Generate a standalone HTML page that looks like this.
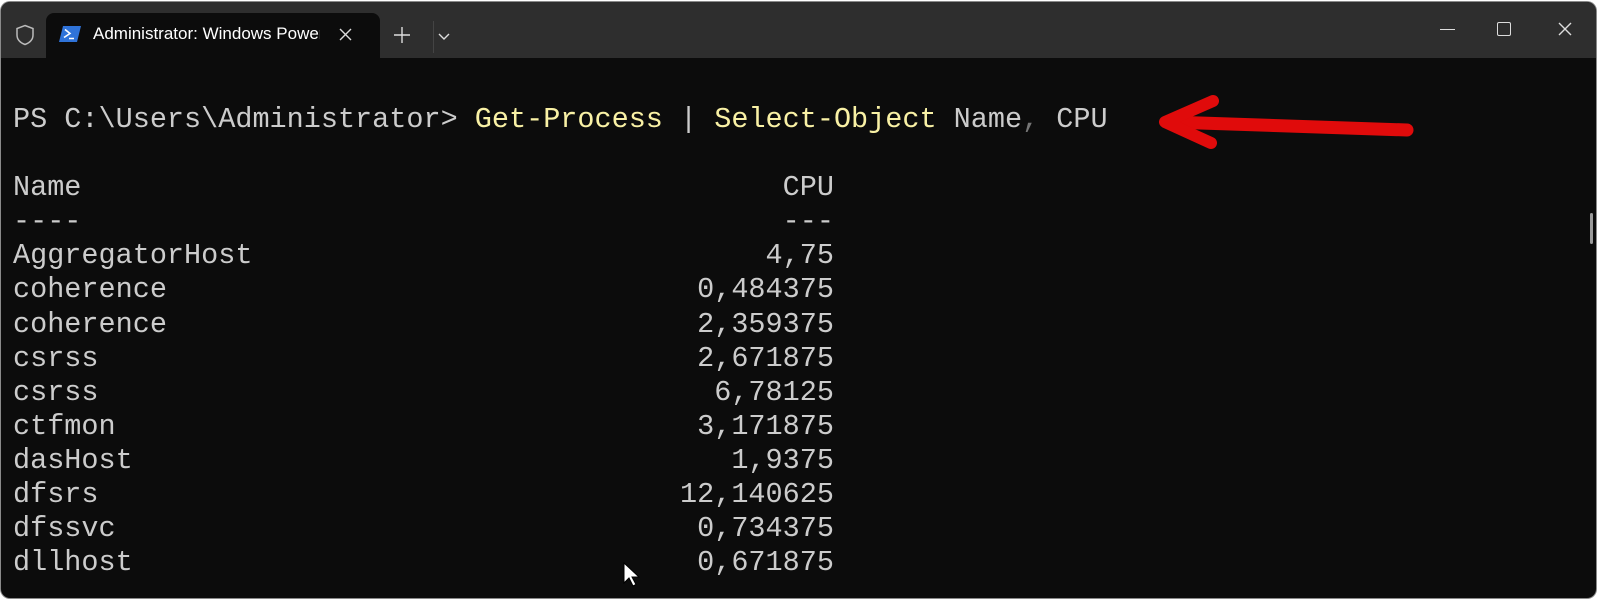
<!DOCTYPE html>
<html><head><meta charset="utf-8"><style>
html,body{margin:0;padding:0;background:#fff;width:1600px;height:601px;overflow:hidden}
.win{position:absolute;left:1px;top:2px;width:1595px;height:596px;background:#0c0c0c;border-radius:9px;overflow:hidden;box-shadow:0 0 0 1px #8a8a8a}
.tb{position:absolute;left:0;top:0;width:100%;height:56px;background:#2e2e2e}
.tab{position:absolute;left:45px;top:11px;width:334px;height:46px;background:#0c0c0c;border-radius:8px 8px 0 0}
.tt{position:absolute;left:92px;top:22px;font:17px "Liberation Sans",sans-serif;color:#fff;white-space:nowrap;width:227px;overflow:hidden}
pre{position:absolute;left:13px;top:103px;margin:0;font:28.5px/34.1px "Liberation Mono",monospace;color:#cccccc}
.y{color:#f9f1a5}.g{color:#767676}
</style></head><body>
<div class="win">
 <div class="tb"></div>
 <div class="tab"></div>
 <svg style="position:absolute;left:14px;top:22px" width="20" height="22" viewBox="0 0 20 22"><path d="M10 1.5 L18 4.5 V11 C18 16 14 19 10 20.5 C6 19 2 16 2 11 V4.5 Z" fill="none" stroke="#bbb" stroke-width="1.5"/></svg>
 <svg style="position:absolute;left:58px;top:24px" width="22" height="16" viewBox="0 0 22 16"><path d="M4 0H22L18 16H0Z" fill="#2f73d9"/><path d="M6 3.5L11 7.5L5 11.5" fill="none" stroke="#fff" stroke-width="1.6"/><path d="M10 12.5H15" stroke="#fff" stroke-width="1.5"/></svg>
 <div class="tt">Administrator: Windows PowerShell</div>
 <svg style="position:absolute;left:338px;top:26px" width="13" height="13"><path d="M1 1L12 12M12 1L1 12" stroke="#ddd" stroke-width="1.4"/></svg>
 <svg style="position:absolute;left:393px;top:25px" width="16" height="16"><path d="M8 0V16M0 8H16" stroke="#ddd" stroke-width="1.4"/></svg>
 <div style="position:absolute;left:432px;top:19px;width:1px;height:32px;background:#444"></div>
 <svg style="position:absolute;left:437px;top:31px" width="12" height="8"><path d="M1 1L6 6L11 1" fill="none" stroke="#ddd" stroke-width="1.4"/></svg>
 <div style="position:absolute;left:1439px;top:27px;width:15px;height:1.4px;background:#ddd"></div>
 <div style="position:absolute;left:1496px;top:20px;width:12px;height:12px;border:1.4px solid #ddd;border-radius:2px"></div>
 <svg style="position:absolute;left:1557px;top:20px" width="14" height="14"><path d="M1 1L13 13M13 1L1 13" stroke="#ddd" stroke-width="1.4"/></svg>
 <div style="position:absolute;left:1589px;top:211px;width:3px;height:31px;background:#9a9a9a;border-radius:2px"></div>
</div>
<pre>PS C:\Users\Administrator&gt; <span class="y">Get-Process</span> | <span class="y">Select-Object</span> Name<span class="g">,</span> CPU

Name                                         CPU
----                                         ---
AggregatorHost                              4,75
coherence                               0,484375
coherence                               2,359375
csrss                                   2,671875
csrss                                    6,78125
ctfmon                                  3,171875
dasHost                                   1,9375
dfsrs                                  12,140625
dfssvc                                  0,734375
dllhost                                 0,671875</pre>
<svg style="position:absolute;left:1156px;top:93px" width="270" height="60" viewBox="0 0 270 60"><path d="M251 37 L14 29" stroke="#e00b0b" stroke-width="13" stroke-linecap="round"/><path d="M57 8 L9 29 L55 50" fill="none" stroke="#e00b0b" stroke-width="12" stroke-linecap="round" stroke-linejoin="round"/></svg>
<svg style="position:absolute;left:623px;top:562px" width="18" height="26" viewBox="0 0 18 26"><path d="M1 1V21L6 16L10 24L13 22.5L9 15H16Z" fill="#fff" stroke="#000" stroke-width="1"/></svg>
</body></html>
